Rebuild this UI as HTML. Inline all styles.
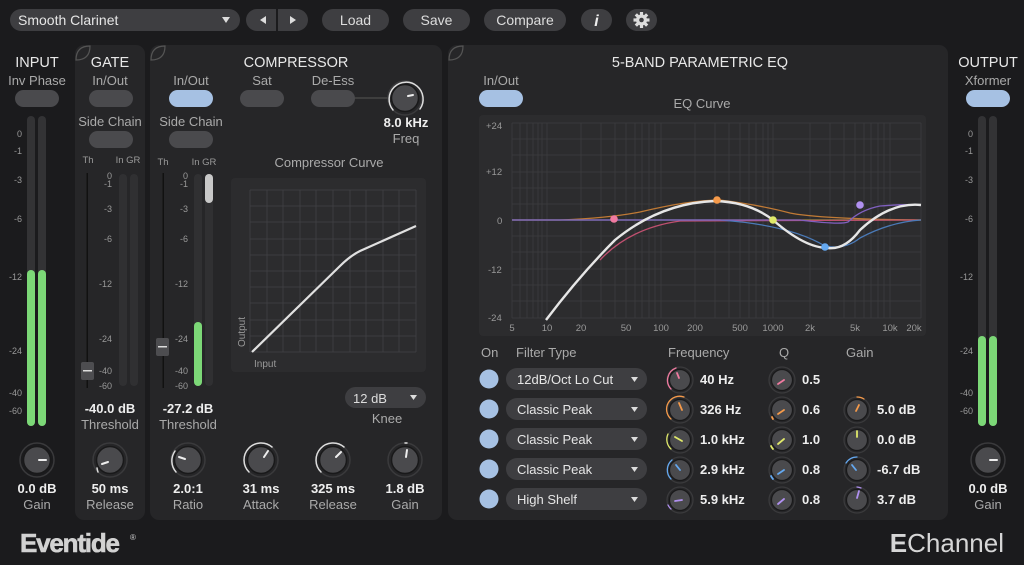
<!DOCTYPE html>
<html><head><meta charset="utf-8"><style>
html,body{margin:0;padding:0;background:#1b1b1d;width:1024px;height:565px;overflow:hidden}
svg{display:block}
text{font-family:"Liberation Sans",sans-serif}
</style></head><body>
<svg width="1024" height="565" viewBox="0 0 1024 565" xmlns="http://www.w3.org/2000/svg">
<rect width="1024" height="565" fill="#1b1b1d"/>
<!-- top bar -->
<rect x="10" y="9" width="230" height="22" rx="11" fill="#3e3e41"/>
<text x="18" y="25" fill="#e6e6e6" font-size="14">Smooth Clarinet</text>
<path d="M222 17 l8 0 l-4 6z" fill="#ddd"/>
<rect x="246" y="9" width="62" height="22" rx="11" fill="#3e3e41"/>
<rect x="276" y="9" width="2" height="22" fill="#1b1b1d"/>
<path d="M266 16 l-6 4 l6 4z" fill="#ddd"/><path d="M290 16 l6 4 l-6 4z" fill="#ddd"/>
<rect x="322" y="9" width="67" height="22" rx="11" fill="#3e3e41"/><text x="355.5" y="25" fill="#ddd" font-size="14" text-anchor="middle">Load</text>
<rect x="403" y="9" width="67" height="22" rx="11" fill="#3e3e41"/><text x="436.5" y="25" fill="#ddd" font-size="14" text-anchor="middle">Save</text>
<rect x="484" y="9" width="82" height="22" rx="11" fill="#3e3e41"/><text x="525" y="25" fill="#ddd" font-size="14" text-anchor="middle">Compare</text>
<rect x="581" y="9" width="31" height="22" rx="11" fill="#3e3e41"/><text x="596.5" y="26" fill="#eee" font-size="16" font-style="italic" font-weight="bold" text-anchor="middle" font-family="Liberation Serif">i</text>
<rect x="626" y="9" width="31" height="22" rx="11" fill="#3e3e41"/>
<g transform="translate(641.5,20)" fill="#ddd"><circle r="5.5"/><g><rect x="-1.6" y="-8" width="3.2" height="16"/><rect x="-1.6" y="-8" width="3.2" height="16" transform="rotate(45)"/><rect x="-1.6" y="-8" width="3.2" height="16" transform="rotate(90)"/><rect x="-1.6" y="-8" width="3.2" height="16" transform="rotate(135)"/></g><circle r="2.3" fill="#3e3e41"/></g>

<!-- panels -->
<rect x="75" y="45" width="70" height="475" rx="9" fill="#262628"/>
<rect x="150" y="45" width="292" height="475" rx="9" fill="#262628"/>
<rect x="448" y="45" width="500" height="475" rx="9" fill="#262628"/>
<g fill="none" stroke="#555" stroke-width="1.2"><path d="M76 60 q0-14 14-14 q0 14 -14 14z"/><path d="M151 60 q0-14 14-14 q0 14 -14 14z"/><path d="M449 60 q0-14 14-14 q0 14 -14 14z"/></g>

<!-- INPUT -->
<text x="37" y="67" fill="#e8e8e8" font-size="14.5" text-anchor="middle">INPUT</text>
<text x="37" y="85" fill="#aaa" font-size="13" text-anchor="middle">Inv Phase</text>
<rect x="15" y="90" width="44" height="17" rx="8.5" fill="#4a4a4d"/>
<rect x="27" y="116" width="8" height="310" rx="4" fill="#333335"/>
<rect x="38" y="116" width="8" height="310" rx="4" fill="#333335"/>
<rect x="27" y="270" width="8" height="156" rx="4" fill="#7cd877"/>
<rect x="38" y="270" width="8" height="156" rx="4" fill="#7cd877"/>
<g fill="#999" font-size="9" text-anchor="end"><text x="22" y="137">0</text><text x="22" y="154">-1</text><text x="22" y="183">-3</text><text x="22" y="222">-6</text><text x="22" y="280">-12</text><text x="22" y="354">-24</text><text x="22" y="396">-40</text><text x="22" y="414">-60</text></g>

<!-- OUTPUT -->
<text x="988" y="67" fill="#e8e8e8" font-size="14.5" text-anchor="middle">OUTPUT</text>
<text x="988" y="85" fill="#aaa" font-size="13" text-anchor="middle">Xformer</text>
<rect x="966" y="90" width="44" height="17" rx="8.5" fill="#a6c1e3"/>
<rect x="978" y="116" width="8" height="310" rx="4" fill="#333335"/>
<rect x="989" y="116" width="8" height="310" rx="4" fill="#333335"/>
<rect x="978" y="336" width="8" height="90" rx="4" fill="#7cd877"/>
<rect x="989" y="336" width="8" height="90" rx="4" fill="#7cd877"/>
<g fill="#999" font-size="9" text-anchor="end"><text x="973" y="137">0</text><text x="973" y="154">-1</text><text x="973" y="183">-3</text><text x="973" y="222">-6</text><text x="973" y="280">-12</text><text x="973" y="354">-24</text><text x="973" y="396">-40</text><text x="973" y="414">-60</text></g>

<!-- GATE -->
<text x="110" y="67" fill="#e8e8e8" font-size="14.5" text-anchor="middle">GATE</text>
<text x="110" y="85" fill="#aaa" font-size="13" text-anchor="middle">In/Out</text>
<rect x="89" y="90" width="44" height="17" rx="8.5" fill="#4a4a4d"/>
<text x="110" y="126" fill="#aaa" font-size="13" text-anchor="middle">Side Chain</text>
<rect x="89" y="131" width="44" height="17" rx="8.5" fill="#4a4a4d"/>
<text x="88" y="163" fill="#999" font-size="9.5" text-anchor="middle">Th</text><text x="128" y="163" fill="#999" font-size="9.5" text-anchor="middle">In GR</text>
<rect x="86.5" y="173" width="1.5" height="215" fill="#111"/>
<rect x="119" y="174" width="8" height="212" rx="4" fill="#303032"/><rect x="130" y="174" width="8" height="212" rx="4" fill="#303032"/>
<rect x="81" y="362" width="13" height="18" rx="2" fill="#4d4d50"/><rect x="83" y="370" width="9" height="1.5" fill="#ddd"/>
<g fill="#999" font-size="9" text-anchor="end"><text x="112" y="179">0</text><text x="112" y="187">-1</text><text x="112" y="212">-3</text><text x="112" y="242">-6</text><text x="112" y="287">-12</text><text x="112" y="342">-24</text><text x="112" y="374">-40</text><text x="112" y="389">-60</text></g>

<!-- COMPRESSOR -->
<text x="296" y="67" fill="#e8e8e8" font-size="14.5" text-anchor="middle">COMPRESSOR</text>
<text x="191" y="85" fill="#aaa" font-size="13" text-anchor="middle">In/Out</text>
<rect x="169" y="90" width="44" height="17" rx="8.5" fill="#a6c1e3"/>
<text x="262" y="85" fill="#aaa" font-size="13" text-anchor="middle">Sat</text>
<rect x="240" y="90" width="44" height="17" rx="8.5" fill="#4a4a4d"/>
<text x="333" y="85" fill="#aaa" font-size="13" text-anchor="middle">De-Ess</text>
<rect x="311" y="90" width="44" height="17" rx="8.5" fill="#4a4a4d"/>
<line x1="355" y1="98" x2="389" y2="98" stroke="#555"/>
<text x="191" y="126" fill="#aaa" font-size="13" text-anchor="middle">Side Chain</text>
<rect x="169" y="131" width="44" height="17" rx="8.5" fill="#4a4a4d"/>
<text x="163" y="165" fill="#999" font-size="9.5" text-anchor="middle">Th</text><text x="204" y="165" fill="#999" font-size="9.5" text-anchor="middle">In GR</text>
<rect x="162.5" y="173" width="1.5" height="215" fill="#111"/>
<rect x="194" y="174" width="8" height="212" rx="4" fill="#303032"/><rect x="205" y="174" width="8" height="212" rx="4" fill="#303032"/>
<rect x="194" y="322" width="8" height="64" rx="4" fill="#7cd877"/>
<rect x="205" y="174" width="8" height="29" rx="4" fill="#c8c8c8"/>
<rect x="156" y="338" width="13" height="18" rx="2" fill="#4d4d50"/><rect x="158" y="346" width="9" height="1.5" fill="#ddd"/>
<g fill="#999" font-size="9" text-anchor="end"><text x="188" y="179">0</text><text x="188" y="187">-1</text><text x="188" y="212">-3</text><text x="188" y="242">-6</text><text x="188" y="287">-12</text><text x="188" y="342">-24</text><text x="188" y="374">-40</text><text x="188" y="389">-60</text></g>

<text x="406" y="127" fill="#eee" font-size="13" font-weight="bold" text-anchor="middle">8.0 kHz</text>
<text x="406" y="143" fill="#aaa" font-size="13" text-anchor="middle">Freq</text>
<text x="329" y="167" fill="#aaa" font-size="13" text-anchor="middle">Compressor Curve</text>
<rect x="231" y="178" width="195" height="194" rx="4" fill="#2c2c2e"/>
<g stroke="#3d3d40" stroke-width="1">
<path d="M250 190h166M250 206h166M250 222h166M250 239h166M250 255h166M250 271h166M250 287h166M250 303h166M250 320h166M250 336h166M250 352h166"/>
<path d="M250 190v162M267 190v162M283 190v162M300 190v162M316 190v162M333 190v162M350 190v162M366 190v162M383 190v162M399 190v162M416 190v162"/>
</g>
<path d="M252 352 L340 266 Q350 256 360 251 L416 226" fill="none" stroke="#e0e0e0" stroke-width="2.2"/>
<text x="254" y="367" fill="#999" font-size="10">Input</text>
<text x="245" y="347" fill="#999" font-size="10" transform="rotate(-90 245 347)">Output</text>
<rect x="345" y="387" width="81" height="21" rx="10.5" fill="#3e3e41"/>
<text x="353" y="403" fill="#ddd" font-size="13">12 dB</text><path d="M410 395 l7 0 l-3.5 5z" fill="#ddd"/>
<text x="387" y="423" fill="#aaa" font-size="13" text-anchor="middle">Knee</text>

<text x="110" y="413" fill="#eee" font-size="13" font-weight="bold" text-anchor="middle">-40.0 dB</text>
<text x="110" y="429" fill="#aaa" font-size="13" text-anchor="middle">Threshold</text>
<text x="188" y="413" fill="#eee" font-size="13" font-weight="bold" text-anchor="middle">-27.2 dB</text>
<text x="188" y="429" fill="#aaa" font-size="13" text-anchor="middle">Threshold</text>

<defs>
<g id="kb"><circle r="17" fill="none" stroke="#3a3a3c" stroke-width="1.5"/><circle r="13.5" fill="#4a4a4d"/><circle r="13.5" fill="none" stroke="#19191a" stroke-width="1.5"/></g>
<g id="ks"><circle r="13" fill="none" stroke="#3a3a3c" stroke-width="1.3"/><circle r="10.5" fill="#4a4a4d"/><circle r="10.5" fill="none" stroke="#19191a" stroke-width="1.2"/></g>
</defs>
<g stroke-linecap="round">
<use href="#kb" x="405" y="98"/><path d="M393 110 A17 17 0 1 1 420 109" fill="none" stroke="#ddd" stroke-width="1.5"/><line x1="408" y1="96" x2="413" y2="95" stroke="#eee" stroke-width="2"/>
<use href="#kb" x="37" y="460"/><line x1="39" y1="460" x2="46" y2="460" stroke="#eee" stroke-width="2"/>
<use href="#kb" x="110" y="460"/><path d="M98 472 A17 17 0 0 1 97 468" fill="none" stroke="#ddd" stroke-width="1.5"/><line x1="102" y1="464" x2="108" y2="462" stroke="#eee" stroke-width="2"/>
<use href="#kb" x="188" y="460"/><path d="M176 472 A17 17 0 0 1 175 451" fill="none" stroke="#ddd" stroke-width="1.5"/><line x1="179" y1="457" x2="185" y2="459" stroke="#eee" stroke-width="2"/>
<use href="#kb" x="261" y="460"/><path d="M249 472 A17 17 0 0 1 272 447" fill="none" stroke="#ddd" stroke-width="1.5"/><line x1="264" y1="457" x2="268" y2="451" stroke="#eee" stroke-width="2"/>
<use href="#kb" x="333" y="460"/><path d="M321 472 A17 17 0 0 1 344 447" fill="none" stroke="#ddd" stroke-width="1.5"/><line x1="336" y1="457" x2="341" y2="452" stroke="#eee" stroke-width="2"/>
<use href="#kb" x="405" y="460"/><path d="M405 443 A17 17 0 0 1 407 443" fill="none" stroke="#ddd" stroke-width="1.5"/><line x1="406" y1="457" x2="407" y2="450" stroke="#eee" stroke-width="2"/>
<use href="#kb" x="988" y="460"/><line x1="990" y1="460" x2="997" y2="460" stroke="#eee" stroke-width="2"/>
</g>
<g font-size="13" text-anchor="middle">
<g fill="#eee" font-weight="bold"><text x="37" y="493">0.0 dB</text><text x="110" y="493">50 ms</text><text x="188" y="493">2.0:1</text><text x="261" y="493">31 ms</text><text x="333" y="493">325 ms</text><text x="405" y="493">1.8 dB</text><text x="988" y="493">0.0 dB</text></g>
<g fill="#aaa"><text x="37" y="509">Gain</text><text x="110" y="509">Release</text><text x="188" y="509">Ratio</text><text x="261" y="509">Attack</text><text x="333" y="509">Release</text><text x="405" y="509">Gain</text><text x="988" y="509">Gain</text></g>
</g>

<!-- EQ -->
<text x="700" y="67" fill="#e8e8e8" font-size="14.5" text-anchor="middle">5-BAND PARAMETRIC EQ</text>
<text x="501" y="85" fill="#aaa" font-size="13" text-anchor="middle">In/Out</text>
<rect x="479" y="90" width="44" height="17" rx="8.5" fill="#a6c1e3"/>
<text x="702" y="108" fill="#aaa" font-size="13" text-anchor="middle">EQ Curve</text>
<rect x="479" y="115" width="447" height="221" rx="4" fill="#2c2c2e"/>
<g stroke="#39393c" stroke-width="1">
<path d="M512 123h409M512 139h409M512 155h409M512 172h409M512 188h409M512 204h409M512 236h409M512 252h409M512 269h409M512 285h409M512 301h409M512 318h409"/>
<path d="M512 123v195M520 123v195M527 123v195M533 123v195M538 123v195M542 123v195M547 123v195M581 123v195M601 123v195M615 123v195M626 123v195M635 123v195M642 123v195M649 123v195M655 123v195M661 123v195M695 123v195M715 123v195M729 123v195M740 123v195M749 123v195M756 123v195M763 123v195M768 123v195M773 123v195M810 123v195M830 123v195M844 123v195M855 123v195M864 123v195M871 123v195M878 123v195M884 123v195M890 123v195M921 123v195"/>
</g>
<line x1="512" y1="220" x2="921" y2="220" stroke="#555"/>
<g fill="#999" font-size="9.5"><text x="486" y="129">+24</text><text x="486" y="175">+12</text><text x="497" y="224">0</text><text x="488" y="273">-12</text><text x="488" y="321">-24</text></g>
<g fill="#999" font-size="9.5" text-anchor="middle"><text x="512" y="331">5</text><text x="547" y="331">10</text><text x="581" y="331">20</text><text x="626" y="331">50</text><text x="661" y="331">100</text><text x="695" y="331">200</text><text x="740" y="331">500</text><text x="773" y="331">1000</text><text x="810" y="331">2k</text><text x="855" y="331">5k</text><text x="890" y="331">10k</text><text x="914" y="331">20k</text></g>
<g fill="none" stroke-width="1.3">
<path d="M512 220 L560 220 Q610 218 640 212 Q690 200 720 200 Q760 205 790 213 Q820 219 921 220" stroke="#c07a35"/>
<path d="M512 220 L921 220" stroke="#9aa03a"/>
<path d="M600 260 Q630 228 680 221 L921 220" stroke="#c05070"/>
<path d="M512 220 L720 220 Q790 225 825 246 Q845 250 860 238 Q890 222 921 220" stroke="#4a7ab8"/>
<path d="M512 220 L800 220 Q840 225 848 222 Q860 210 880 206 Q905 204 921 205" stroke="#8060c0"/>
</g>
<path d="M546 320 Q580 275 615 240 Q660 203 715 201 Q750 202 773 220 Q805 248 828 248 Q845 250 860 230 Q890 202 921 205" fill="none" stroke="#e6e6e6" stroke-width="2.4"/>
<circle cx="614" cy="219" r="3.8" fill="#f07aa0"/><circle cx="717" cy="200" r="3.8" fill="#f59a4a"/><circle cx="773" cy="220" r="3.8" fill="#dfe86a"/><circle cx="825" cy="247" r="3.8" fill="#64a8f0"/><circle cx="860" cy="205" r="3.8" fill="#b090f0"/>

<g fill="#aaa" font-size="13"><text x="481" y="357">On</text><text x="516" y="357">Filter Type</text><text x="668" y="357">Frequency</text><text x="779" y="357">Q</text><text x="846" y="357">Gain</text></g>
<g fill="#a6c1e3"><circle cx="489" cy="379" r="9.5"/><circle cx="489" cy="409" r="9.5"/><circle cx="489" cy="439" r="9.5"/><circle cx="489" cy="469" r="9.5"/><circle cx="489" cy="499" r="9.5"/></g>
<g fill="#3e3e41"><rect x="506" y="368" width="141" height="22" rx="11"/><rect x="506" y="398" width="141" height="22" rx="11"/><rect x="506" y="428" width="141" height="22" rx="11"/><rect x="506" y="458" width="141" height="22" rx="11"/><rect x="506" y="488" width="141" height="22" rx="11"/></g>
<g fill="#e6e6e6" font-size="13"><text x="517" y="384">12dB/Oct Lo Cut</text><text x="517" y="414">Classic Peak</text><text x="517" y="444">Classic Peak</text><text x="517" y="474">Classic Peak</text><text x="517" y="504">High Shelf</text></g>
<g fill="#ddd"><path d="M631 377h7l-3.5 5z"/><path d="M631 407h7l-3.5 5z"/><path d="M631 437h7l-3.5 5z"/><path d="M631 467h7l-3.5 5z"/><path d="M631 497h7l-3.5 5z"/></g>
<g stroke-linecap="round" stroke-width="1.8">
<use href="#ks" x="680" y="380"/><path d="M671 389 A13 13 0 0 1 676 368" fill="none" stroke="#f07aa0" stroke-width="1.3"/><line x1="679" y1="375" x2="681" y2="380" stroke="#f07aa0" transform="translate(-2,-2)"/>
<use href="#ks" x="680" y="410"/><path d="M671 419 A13 13 0 0 1 684 397" fill="none" stroke="#f59a4a" stroke-width="1.3"/><line x1="681" y1="405" x2="684" y2="412" stroke="#f59a4a" transform="translate(-2,-2)"/>
<use href="#ks" x="680" y="440"/><path d="M671 449 A13 13 0 0 1 668 434" fill="none" stroke="#dfe86a" stroke-width="1.3"/><line x1="676" y1="437" x2="683" y2="441" stroke="#dfe86a" transform="translate(-1,0)"/>
<use href="#ks" x="680" y="470"/><path d="M671 479 A13 13 0 0 1 672 460" fill="none" stroke="#64a8f0" stroke-width="1.3"/><line x1="676" y1="465" x2="680" y2="470" stroke="#64a8f0"/>
<use href="#ks" x="680" y="500"/><path d="M671 509 A13 13 0 0 1 668 505" fill="none" stroke="#b090f0" stroke-width="1.3"/><line x1="675" y1="501" x2="682" y2="500" stroke="#b090f0"/>
<use href="#ks" x="782" y="380"/><line x1="778" y1="384" x2="784" y2="380" stroke="#f07aa0"/>
<use href="#ks" x="782" y="410"/><line x1="778" y1="414" x2="784" y2="410" stroke="#f59a4a"/><path d="M773 419 A13 13 0 0 1 772 417" fill="none" stroke="#f59a4a"/>
<use href="#ks" x="782" y="440"/><line x1="778" y1="444" x2="784" y2="439" stroke="#dfe86a"/><path d="M773 449 A13 13 0 0 1 771 446" fill="none" stroke="#dfe86a"/>
<use href="#ks" x="782" y="470"/><line x1="778" y1="474" x2="784" y2="470" stroke="#64a8f0"/><path d="M773 479 A13 13 0 0 1 771 476" fill="none" stroke="#64a8f0"/>
<use href="#ks" x="782" y="500"/><line x1="778" y1="504" x2="784" y2="499" stroke="#b090f0"/>
<use href="#ks" x="857" y="410"/><path d="M857 397 A13 13 0 0 1 864 399" fill="none" stroke="#f59a4a" stroke-width="1.3"/><line x1="857" y1="410" x2="860" y2="404" stroke="#f59a4a" transform="translate(-1,1)"/>
<use href="#ks" x="857" y="440"/><line x1="857" y1="437" x2="857" y2="431" stroke="#dfe86a"/>
<use href="#ks" x="857" y="470"/><path d="M857 457 A13 13 0 0 0 846 463" fill="none" stroke="#64a8f0" stroke-width="1.3"/><line x1="852" y1="465" x2="856" y2="470" stroke="#64a8f0"/>
<use href="#ks" x="857" y="500"/><path d="M857 487 A13 13 0 0 1 861 488" fill="none" stroke="#b090f0" stroke-width="1.3"/><line x1="857" y1="498" x2="859" y2="491" stroke="#b090f0"/>
</g>
<g fill="#eee" font-size="13" font-weight="bold">
<text x="700" y="384">40 Hz</text><text x="700" y="414">326 Hz</text><text x="700" y="444">1.0 kHz</text><text x="700" y="474">2.9 kHz</text><text x="700" y="504">5.9 kHz</text>
<text x="802" y="384">0.5</text><text x="802" y="414">0.6</text><text x="802" y="444">1.0</text><text x="802" y="474">0.8</text><text x="802" y="504">0.8</text>
<text x="877" y="414">5.0 dB</text><text x="877" y="444">0.0 dB</text><text x="877" y="474">-6.7 dB</text><text x="877" y="504">3.7 dB</text>
</g>

<!-- logos -->
<text x="20" y="552" fill="#d2d2d2" font-size="26" font-weight="bold" letter-spacing="-1.2" stroke="#d2d2d2" stroke-width="0.6">Eventide</text>
<text x="130" y="540" fill="#d2d2d2" font-size="8">®</text>
<text x="1004" y="552" fill="#d6d6d6" font-size="26" text-anchor="end"><tspan font-weight="bold">E</tspan>Channel</text>
</svg>
</body></html>
